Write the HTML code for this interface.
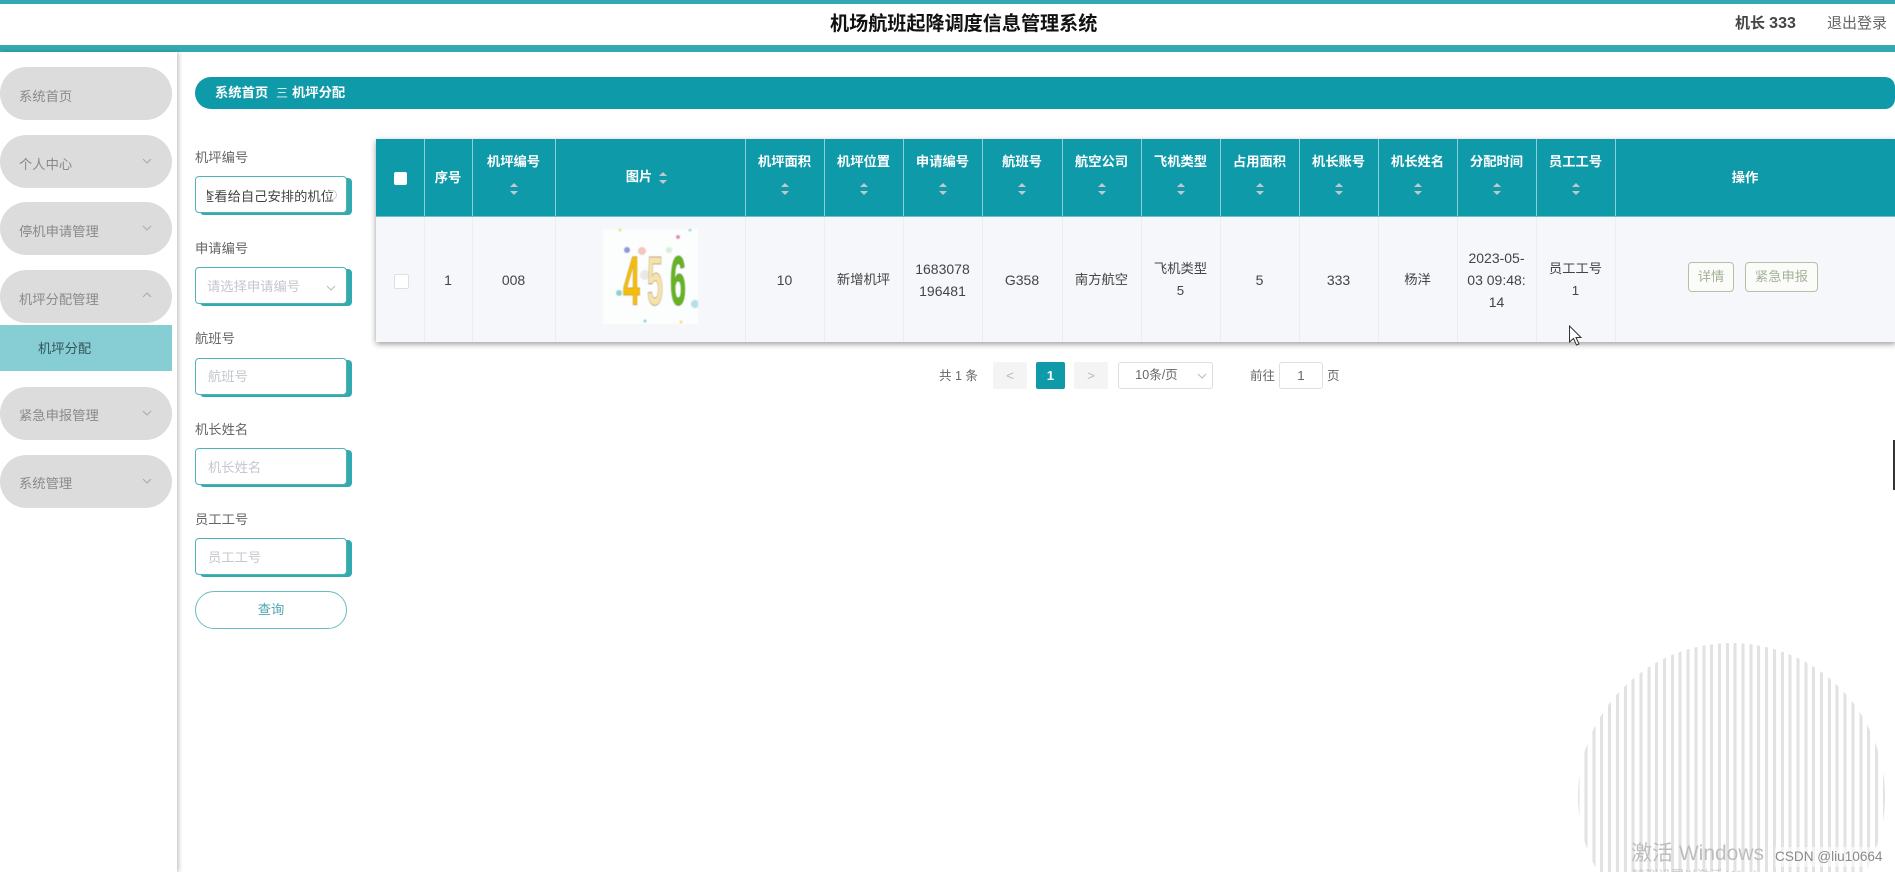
<!DOCTYPE html>
<html lang="zh">
<head>
<meta charset="utf-8">
<title>机场航班起降调度信息管理系统</title>
<style>
html,body{margin:0;padding:0;width:1895px;height:872px;overflow:hidden;background:#fff}
body{position:relative;font-family:"Liberation Sans","Noto Sans CJK SC",sans-serif;font-size:13.3px;color:#555}
.wrap{position:absolute;left:0;top:0;width:1895px;height:872px;overflow:hidden;filter:blur(.35px)}
.a{position:absolute;white-space:nowrap;line-height:20px}
.bar{position:absolute;left:0;width:1895px;background:#33a9b0}
.side{position:absolute;left:0;top:52px;width:177px;height:820px;background:#fff;box-shadow:2px 0 4px rgba(0,0,0,.22)}
.mi{position:absolute;left:0;width:172px;height:53px;border-radius:27px;background:#dcdcdc}
.mt{color:#8a8a8a;left:19px}
.chev{position:absolute;left:142px;width:10px;height:6px}
.lab{left:195px;color:#666}
.inp{position:absolute;left:195px;width:150px;height:35px;border:1.5px solid #4fb3ba;border-radius:4px;background:#fff;box-shadow:5px 2px 0 #33a9b0}
.ph{color:#c4c7cd;left:207px}
table{position:absolute;left:376px;top:139px;width:1519px;border-collapse:collapse;table-layout:fixed;box-shadow:0 2px 6px rgba(0,0,0,.4)}
th{background:#0f9aaa;height:77px;padding:0;border-right:1px solid #8ccfd6;border-bottom:1px solid #6cc2ca;position:relative;color:#fff;font-weight:bold}
td{background:#f5f7fa;height:125px;padding:0;border-right:1px solid #eaedf1;text-align:center;line-height:22px;color:#444}
td.n{font-size:14px}
th .t{position:absolute;left:0;right:0;top:13px;line-height:20px;text-align:center}
th .m{position:absolute;left:0;right:0;top:29px;line-height:20px;text-align:center}
.s{position:absolute;width:8px;height:12px;left:50%;margin-left:-4px;top:44px}
.s:before,.s:after{content:"";position:absolute;left:0;border-left:4px solid transparent;border-right:4px solid transparent}
.s:before{top:0;border-bottom:4px solid #c0c8cb}
.s:after{bottom:0;border-top:4px solid #c0c8cb}
.btn{position:absolute;top:262px;height:28px;border:1.5px solid #b5bfa8;border-radius:4px;background:#fbfcf9;color:#a5b198;line-height:27px;text-align:center;font-size:13.3px}
.pg{position:absolute;top:362px;height:27px;line-height:27px;text-align:center;border-radius:2px;background:#f4f4f5;color:#b5b8bd}
.box{position:absolute;background:#fff;border:1px solid #dcdfe6;border-radius:3px;box-sizing:border-box;color:#666;text-align:center;line-height:25px}
.circle{position:absolute;left:1578px;top:643px;width:307px;height:229px;clip-path:circle(153.5px at 153.5px 153.5px);background:repeating-linear-gradient(90deg,#e2e2e2 0,#e2e2e2 1.65px,#fff 1.65px,#fff 6.5px,#e2e2e2 6.5px,#e2e2e2 7.85px)}
</style>
</head>
<body>
<div class="wrap">
<div class="circle"></div>

<!-- header -->
<div class="bar" style="top:0;height:4px"></div>
<div class="bar" style="top:45px;height:7px"></div>
<div class="a" style="left:830px;top:15px;font-size:19.1px;font-weight:bold;color:#111">机场航班起降调度信息管理系统</div>
<div class="a" style="left:1735px;top:14px;font-size:15px;font-weight:bold;color:#444">机长 <span style="font-size:16px">333</span></div>
<div class="a" style="left:1827px;top:14px;font-size:15px;color:#666">退出登录</div>

<!-- sidebar -->
<div class="side"></div>
<div class="mi" style="top:67px"></div><div class="a mt" style="top:87px">系统首页</div>
<div class="mi" style="top:135px"></div><div class="a mt" style="top:155px">个人中心</div>
<svg class="chev" style="top:158px" viewBox="0 0 10 6"><path d="M1 1L5 5L9 1" fill="none" stroke="#aaa" stroke-width="1"/></svg>
<div class="mi" style="top:202px"></div><div class="a mt" style="top:222px">停机申请管理</div>
<svg class="chev" style="top:225px" viewBox="0 0 10 6"><path d="M1 1L5 5L9 1" fill="none" stroke="#aaa" stroke-width="1"/></svg>
<div class="mi" style="top:270px"></div><div class="a mt" style="top:290px">机坪分配管理</div>
<svg class="chev" style="top:292px" viewBox="0 0 10 6"><path d="M1 5L5 1L9 5" fill="none" stroke="#aaa" stroke-width="1"/></svg>
<div style="position:absolute;left:0;top:325px;width:172px;height:46px;background:#87cdd4"></div>
<div class="a" style="left:38px;top:339px;color:#33555a">机坪分配</div>
<div class="mi" style="top:387px"></div><div class="a mt" style="top:406px">紧急申报管理</div>
<svg class="chev" style="top:410px" viewBox="0 0 10 6"><path d="M1 1L5 5L9 1" fill="none" stroke="#aaa" stroke-width="1"/></svg>
<div class="mi" style="top:455px"></div><div class="a mt" style="top:474px">系统管理</div>
<svg class="chev" style="top:478px" viewBox="0 0 10 6"><path d="M1 1L5 5L9 1" fill="none" stroke="#aaa" stroke-width="1"/></svg>

<!-- breadcrumb -->
<div style="position:absolute;left:195px;top:77px;width:1700px;height:32px;border-radius:16px 10px 10px 16px;background:#0f9aaa"></div>
<div class="a" style="left:215px;top:83px;color:#fff;font-weight:bold">系统首页</div>
<div class="a" style="left:276px;top:83px;color:#e6f5f6;font-size:12px">三</div>
<div class="a" style="left:292px;top:83px;color:#fff;font-weight:bold">机坪分配</div>

<!-- search form -->
<div class="a lab" style="top:148px">机坪编号</div>
<div class="inp" style="top:176px"></div>
<div style="position:absolute;left:207px;top:187px;width:128px;height:20px;overflow:hidden"><div class="a" style="left:-6px;top:0;color:#444">查看给自己安排的机位</div></div>
<div style="position:absolute;left:327px;top:190px;width:8px;height:8px;border:1px solid #ccc;border-radius:50%"></div>

<div class="a lab" style="top:239px">申请编号</div>
<div class="inp" style="top:267px"></div>
<div class="a ph" style="top:277px">请选择申请编号</div>
<svg class="chev" style="left:326px;top:285px" viewBox="0 0 10 6"><path d="M1 1L5 5L9 1" fill="none" stroke="#bbb" stroke-width="1"/></svg>

<div class="a lab" style="top:329px">航班号</div>
<div class="inp" style="top:358px"></div>
<div class="a ph" style="left:208px;top:367px">航班号</div>

<div class="a lab" style="top:420px">机长姓名</div>
<div class="inp" style="top:448px"></div>
<div class="a ph" style="left:208px;top:458px">机长姓名</div>

<div class="a lab" style="top:510px">员工工号</div>
<div class="inp" style="top:538px"></div>
<div class="a ph" style="left:208px;top:548px">员工工号</div>

<div style="position:absolute;left:195px;top:591px;width:150px;height:36px;border:1.5px solid #6cbcc4;border-radius:19px;text-align:center;line-height:36px;color:#4fa9b0;background:#fff">查询</div>

<!-- table -->
<table>
<colgroup><col style="width:48px"><col style="width:48px"><col style="width:83px"><col style="width:190px"><col style="width:79px"><col style="width:79px"><col style="width:79px"><col style="width:80px"><col style="width:79px"><col style="width:79px"><col style="width:79px"><col style="width:79px"><col style="width:79px"><col style="width:79px"><col style="width:79px"><col style="width:280px"></colgroup>
<tr>
<th></th>
<th><span class="m">序号</span></th>
<th><span class="t">机坪编号</span><i class="s"></i></th>
<th><span class="m" style="left:-22px;right:0;top:28px">图片</span><i class="s" style="margin-left:9px;top:33px"></i></th>
<th><span class="t">机坪面积</span><i class="s"></i></th>
<th><span class="t">机坪位置</span><i class="s"></i></th>
<th><span class="t">申请编号</span><i class="s"></i></th>
<th><span class="t">航班号</span><i class="s"></i></th>
<th><span class="t">航空公司</span><i class="s"></i></th>
<th><span class="t">飞机类型</span><i class="s"></i></th>
<th><span class="t">占用面积</span><i class="s"></i></th>
<th><span class="t">机长账号</span><i class="s"></i></th>
<th><span class="t">机长姓名</span><i class="s"></i></th>
<th><span class="t">分配时间</span><i class="s"></i></th>
<th><span class="t">员工工号</span><i class="s"></i></th>
<th><span class="m" style="left:-20px;right:0">操作</span></th>
</tr>
<tr>
<td></td><td class="n">1</td><td class="n">008</td><td></td><td class="n">10</td><td>新增机坪</td><td class="n">1683078<br>196481</td><td class="n">G358</td><td>南方航空</td><td>飞机类型<br>5</td><td class="n">5</td><td class="n">333</td><td>杨洋</td><td class="n">2023-05-<br>03 09:48:<br>14</td><td>员工工号<br>1</td><td></td>
</tr>
</table>
<div style="position:absolute;left:394px;top:172px;width:13px;height:13px;background:#fff;border-radius:2px"></div>
<div style="position:absolute;left:394px;top:274px;width:13px;height:13px;background:#fff;border:1px solid #dcdfe6;border-radius:2px"></div>

<!-- picture -->
<svg style="position:absolute;left:603px;top:229px;filter:blur(.6px)" width="95" height="95" viewBox="0 0 95 95">
<rect width="95" height="95" fill="#fcfdfd"/>
<circle cx="24" cy="21" r="3" fill="#8c9bd0"/><circle cx="39" cy="22" r="4" fill="#f2c7bd"/><circle cx="75" cy="8" r="2" fill="#d896b4"/><circle cx="66" cy="21" r="3" fill="#d8efdc"/>
<circle cx="16" cy="64" r="3" fill="#8fd2c9"/><circle cx="92" cy="75" r="4" fill="#b2e0e6"/><circle cx="42" cy="46" r="5" fill="#e8e8e8"/><circle cx="17" cy="1" r="1.5" fill="#f0e070"/><circle cx="87" cy="1" r="1.5" fill="#9ad8d8"/><circle cx="42" cy="92" r="1.5" fill="#8fd0e0"/><circle cx="78" cy="93" r="1.5" fill="#f5e070"/>
<text x="20" y="76" font-family="Liberation Sans" font-size="70" font-weight="bold" textLength="17" lengthAdjust="spacingAndGlyphs" fill="#f6bc08" stroke="#b89a55" stroke-width=".8">4</text>
<text x="44" y="76" font-family="Liberation Sans" font-size="70" font-weight="bold" textLength="16" lengthAdjust="spacingAndGlyphs" fill="#f7e2a8" stroke="#a09a88" stroke-width=".8">5</text>
<text x="67" y="76" font-family="Liberation Sans" font-size="70" font-weight="bold" textLength="16" lengthAdjust="spacingAndGlyphs" fill="#64b41e" stroke="#6d8a5a" stroke-width=".8">6</text>
</svg>

<!-- action buttons -->
<div class="btn" style="left:1688px;width:44px">详情</div>
<div class="btn" style="left:1745px;width:71px">紧急申报</div>

<!-- cursor -->
<svg style="position:absolute;left:1568px;top:325px" width="16" height="22" viewBox="0 0 16 22"><path d="M1.5 1L1.5 17L5.5 13.5L8.5 20L11 19L8 12.5L13 12.5Z" fill="#fff" stroke="#333" stroke-width="1"/></svg>

<!-- pagination -->
<div class="a" style="left:939px;top:366px;color:#666;font-size:12.5px">共 1 条</div>
<div class="pg" style="left:993px;width:34px">&lt;</div>
<div class="pg" style="left:1036px;width:29px;background:#0f9aaa;color:#fff;font-weight:bold">1</div>
<div class="pg" style="left:1074px;width:34px">&gt;</div>
<div class="box" style="left:1118px;top:362px;width:95px;height:27px;padding-right:18px;font-size:12.5px">10条/页</div>
<svg class="chev" style="left:1197px;top:373px" viewBox="0 0 10 6"><path d="M1 1L5 5L9 1" fill="none" stroke="#bbb" stroke-width="1"/></svg>
<div class="a" style="left:1250px;top:366px;color:#666;font-size:12.5px">前往</div>
<div class="box" style="left:1279px;top:362px;width:44px;height:27px">1</div>
<div class="a" style="left:1327px;top:366px;color:#666;font-size:12.5px">页</div>

<!-- scrollbar fragment -->
<div style="position:absolute;left:1893px;top:440px;width:2px;height:50px;background:#333"></div>

<!-- watermarks -->
<div class="a" style="left:1631px;top:842px;font-size:21px;line-height:24px;color:#bdbdbd">激活 Windows</div>
<div style="position:absolute;left:1632px;top:866px;width:200px;height:6px;overflow:hidden"><div class="a" style="left:0;top:0;font-size:13px;color:#c8c8c8">转到设置以激活 Windows。</div></div>
<div class="a" style="left:1775px;top:847px;font-size:13.6px;color:#8a8a8a;background:rgba(255,255,255,.55)">CSDN @liu10664</div>
</div>
</body>
</html>
